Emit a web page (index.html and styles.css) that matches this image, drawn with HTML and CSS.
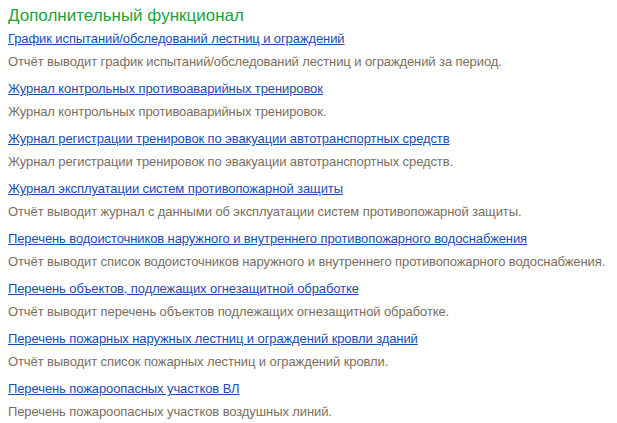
FILE: index.html
```html
<!DOCTYPE html>
<html lang="ru">

<head>
    <meta charset="UTF-8">
    <title>Дополнительный функционал</title>
    <link rel="stylesheet" href="styles.css">
</head>

<body>
    <div class="panel">
        <div class="title">Дополнительный функционал</div>

        <div class="item">
            <a href="javascript:;">График испытаний/обследований лестниц и ограждений</a>
            <div class="desc">Отчёт выводит график испытаний/обследований лестниц и ограждений за период.</div>
        </div>
        <div class="item">
            <a href="javascript:;">Журнал контрольных противоаварийных тренировок</a>
            <div class="desc">Журнал контрольных противоаварийных тренировок.</div>
        </div>
        <div class="item">
            <a href="javascript:;">Журнал регистрации тренировок по эвакуации автотранспортных средств</a>
            <div class="desc">Журнал регистрации тренировок по эвакуации автотранспортных средств.</div>
        </div>
        <div class="item">
            <a href="javascript:;">Журнал эксплуатации систем противопожарной защиты</a>
            <div class="desc">Отчёт выводит журнал с данными об эксплуатации систем противопожарной защиты.</div>
        </div>
        <div class="item">
            <a href="javascript:;">Перечень водоисточников наружного и внутреннего противопожарного водоснабжения</a>
            <div class="desc">Отчёт выводит список водоисточников наружного и внутреннего противопожарного водоснабжения.</div>
        </div>
        <div class="item">
            <a href="javascript:;">Перечень объектов, подлежащих огнезащитной обработке</a>
            <div class="desc">Отчёт выводит перечень объектов подлежащих огнезащитной обработке.</div>
        </div>
        <div class="item">
            <a href="javascript:;">Перечень пожарных наружных лестниц и ограждений кровли зданий</a>
            <div class="desc">Отчёт выводит список пожарных лестниц и ограждений кровли.</div>
        </div>
        <div class="item">
            <a href="javascript:;">Перечень пожароопасных участков ВЛ</a>
            <div class="desc">Перечень пожароопасных участков воздушных линий.</div>
        </div>
    </div>
</body>

</html>
```

FILE: styles.css
```css
* {
    margin: 0;
    padding: 0;
}

body {
    background-color: #fff;
    font-family: "Liberation Sans", Arial, sans-serif;
}

.panel {
    padding: 6px 0 6px 8px;
}

.title {
    font-size: 17px;
    line-height: 20px;
    color: #1aa33c;
    margin-bottom: 3px;
}

.item {
    margin-bottom: 7px;
}

.item a {
    display: inline-block;
    font-size: 13px;
    line-height: 20px;
    letter-spacing: -0.1px;
    color: #1a4db5;
    text-decoration: underline;
}

.desc {
    font-size: 13px;
    line-height: 20px;
    letter-spacing: -0.1px;
    white-space: nowrap;
    color: #7b6e5e;
    margin-top: 3px;
}
```
